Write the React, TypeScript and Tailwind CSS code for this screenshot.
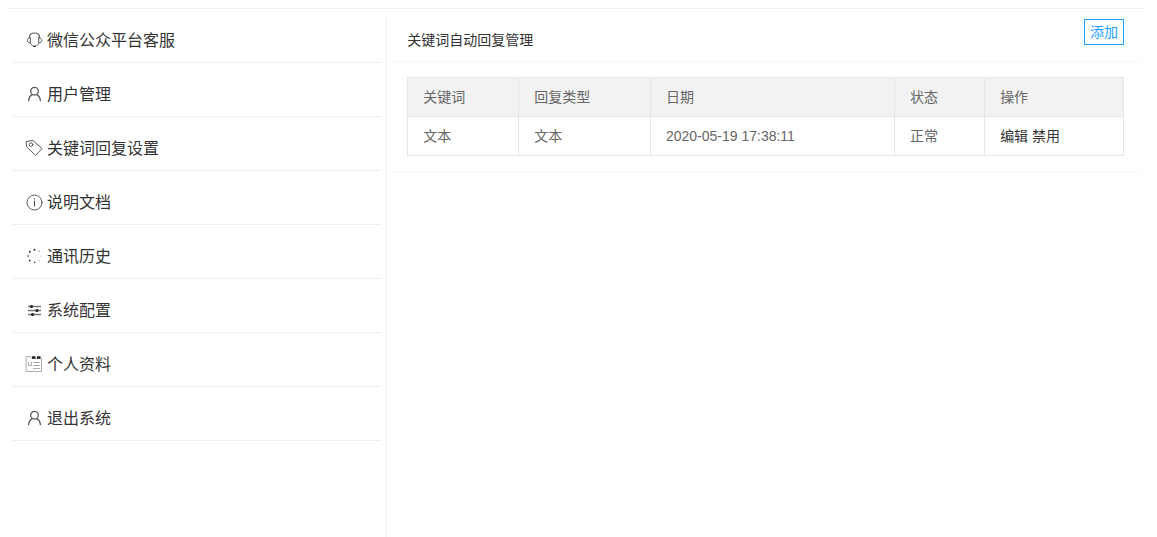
import type { ReactNode } from "react";

function Icon({ children }: { children: ReactNode }) {
  return (
    <svg
      className="mb-0.5 h-[18px] w-[18px] shrink-0"
      viewBox="0 0 18 18"
      fill="none"
      stroke="#5c5c5c"
      strokeWidth="1"
      strokeLinecap="round"
      strokeLinejoin="round"
      aria-hidden="true"
    >
      {children}
    </svg>
  );
}

const headset = (
  <Icon>
    <path d="M4.300 6.500C4.500 3.700 6.500 2 9.500 2s5 1.700 5.200 4.500" strokeWidth="1.200" />
    <path d="M5.300 7v4.800C3.400 12 2.300 11 2.300 9.400S3.400 6.800 5.300 7z" />
    <path d="M13.700 7v4.800c1.900.2 3-.8 3-2.400s-1.100-2.600-3-2.400z" />
    <path d="M5.300 12c.4 1.500 1.400 2.500 3 3" />
    <path d="M13.700 12c-.3 1.200-.9 2-2 2.500" />
    <path d="M8.800 15.200h1.600" stroke="#333" strokeWidth="1.500" />
  </Icon>
);

const user = (
  <Icon>
    <circle cx="9.500" cy="6.200" r="3.800" strokeWidth="1.300" />
    <path d="M3.600 15.700c.3-3 1.700-5 3.700-6M15.400 15.700c-.3-3-1.700-5-3.700-6" strokeWidth="1.300" />
  </Icon>
);

const tag = (
  <Icon>
    <path d="M1.500 2.500 8 1.500 17 9.600 10.700 16.400 2 8.300z" />
    <circle cx="6" cy="5.700" r="1.800" />
  </Icon>
);

const info = (
  <Icon>
    <circle cx="9.500" cy="9.500" r="7.500" />
    <path d="M9.500 8v5" stroke="#444" />
    <circle cx="9.500" cy="5.900" r=".7" fill="#444" stroke="none" />
  </Icon>
);

const loading = (
  <Icon>
    <g stroke="none" fill="#333">
      <circle cx="3" cy="9" r=".8" />
      <circle cx="4.800" cy="4.700" r="1" />
      <circle cx="9.500" cy="2.700" r="1" />
      <circle cx="4.800" cy="13.500" r=".9" />
      <circle cx="9.500" cy="15.300" r=".8" />
      <circle cx="14" cy="4.200" r=".7" fill="#888" />
      <circle cx="16" cy="9" r=".5" fill="#aaa" />
      <circle cx="14" cy="13.700" r=".6" fill="#999" />
    </g>
  </Icon>
);

const sliders = (
  <Icon>
    <path d="M3 5.500h13M3 9.500h13M3 13.500h13" strokeWidth="1.300" strokeLinecap="butt" stroke="#777" />
    <g stroke="none" fill="#222">
      <circle cx="6.500" cy="5.500" r="1.600" />
      <circle cx="12" cy="9.500" r="1.600" />
      <circle cx="7.500" cy="13.500" r="1.600" />
    </g>
  </Icon>
);

const profile = (
  <Icon>
    <path d="M1.500 1.500h4l1 2h10v13h-15z" stroke="#aaa" />
    <path d="M7 2.500h3.500M12 2.500h3.500" stroke="#222" strokeWidth="2.400" strokeLinecap="butt" />
    <path d="M3.500 7.500v3h3v-3M8.500 7.500h6M8.500 10.500h6M8.500 13.500h6" stroke="#aaa" />
  </Icon>
);

const menu = [
  { label: "微信公众平台客服", icon: headset },
  { label: "用户管理", icon: user },
  { label: "关键词回复设置", icon: tag },
  { label: "说明文档", icon: info },
  { label: "通讯历史", icon: loading },
  { label: "系统配置", icon: sliders },
  { label: "个人资料", icon: profile },
  { label: "退出系统", icon: user },
];

const cell = "border border-[#e6e6e6] px-[15px] py-[9px] text-left font-normal";

export default function App() {
  return (
    <div className="flex min-h-screen flex-col bg-white pt-2 pr-3 pl-[7px] font-['Liberation_Sans','Noto_Sans_CJK_SC',sans-serif] text-sm leading-5 text-[#333]">
      <hr className="border-[#eee]" />
      <div className="flex grow">
        <nav className="flex w-1/3 flex-col">
          <ul className="px-[5px]">
            {menu.map((item) => (
              <li key={item.label} className="border-b border-[#eee]">
                <a href="#" className="flex items-center gap-1 pt-5 pr-3 pb-[9px] pl-[13px] text-base leading-6">
                  {item.icon}
                  {item.label}
                </a>
              </li>
            ))}
          </ul>
        </nav>
        <main className="mt-[9px] min-w-0 flex-1 border-l border-[#eee] pr-[5px] pl-1">
          <section className="rounded-xs bg-white shadow-[0_1px_2px_0_rgba(0,0,0,0.05)]">
            <header className="flex h-11 items-start justify-between border-b border-[#f6f6f6] px-4 pt-px">
              <h1 className="pt-[11px]">关键词自动回复管理</h1>
              <button type="button" className="border border-[#1e9fff] px-[5px] py-[2px] text-[#1e9fff]">
                添加
              </button>
            </header>
            <div className="px-4 py-[15px]">
              <table className="w-full border-collapse text-[#666]">
                <thead className="bg-[#f2f2f2]">
                  <tr>
                    <th className={`${cell} w-[15.5%]`}>关键词</th>
                    <th className={`${cell} w-[18.4%]`}>回复类型</th>
                    <th className={`${cell} w-[34.1%]`}>日期</th>
                    <th className={`${cell} w-[12.6%]`}>状态</th>
                    <th className={cell}>操作</th>
                  </tr>
                </thead>
                <tbody>
                  <tr>
                    <td className={cell}>文本</td>
                    <td className={cell}>文本</td>
                    <td className={cell}>2020-05-19 17:38:11</td>
                    <td className={cell}>正常</td>
                    <td className={`${cell} text-[#333]`}>
                      <a href="#">编辑</a> <a href="#">禁用</a>
                    </td>
                  </tr>
                </tbody>
              </table>
            </div>
          </section>
        </main>
      </div>
    </div>
  );
}
